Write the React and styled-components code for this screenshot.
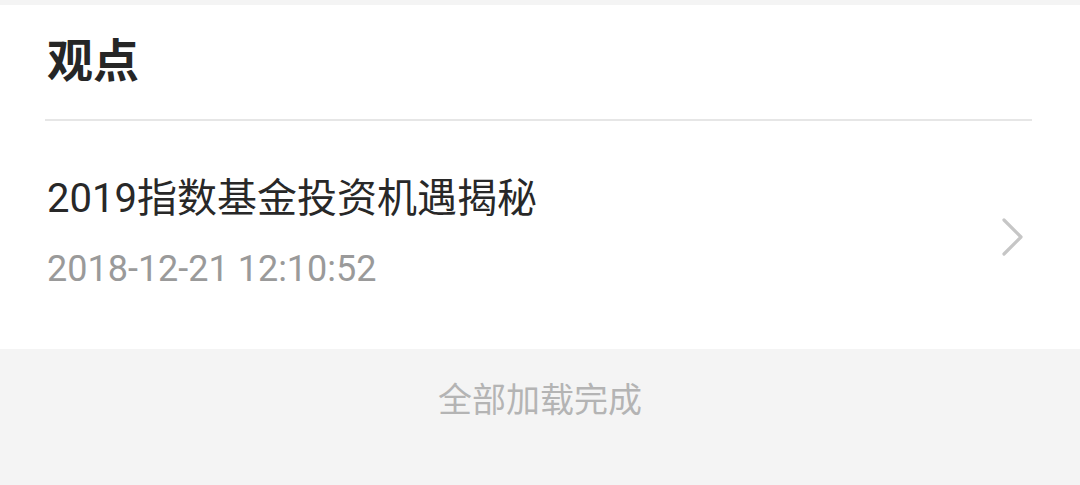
import React from "react";
import styled, { createGlobalStyle } from "styled-components";

const Global = createGlobalStyle`
  html, body { margin: 0; padding: 0; background: #f4f4f4; }
  body { font-family: Roboto, "Noto Sans CJK SC", sans-serif; }
`;

const Page = styled.div`
  width: 1080px;
  height: 485px;
  display: flex;
  flex-direction: column;
  background: #f4f4f4;
  padding-top: 5px;
  box-sizing: border-box;
`;

const Card = styled.section`
  background: #ffffff;
  padding: 0 48px 0 45px;
  height: 344px;
  box-sizing: border-box;
  display: flex;
  flex-direction: column;
`;

const Heading = styled.h2`
  margin: 0;
  height: 116px;
  display: flex;
  align-items: center;
  padding-left: 2px;
  padding-bottom: 10px;
  box-sizing: border-box;
  font-family: "Noto Sans CJK SC", sans-serif;
  font-weight: 700;
  font-size: 46px;
  color: #262626;
  border-bottom: 2px solid #e6e6e6;
`;

const Row = styled.div`
  display: flex;
  align-items: center;
  justify-content: space-between;
  flex: 1;
  padding-left: 2px;
  padding-bottom: 5px;
`;

const Texts = styled.div`
  display: flex;
  flex-direction: column;
  gap: 23px;
`;

const Title = styled.div`
  font-family: Roboto, "Noto Sans CJK SC", sans-serif;
  font-size: 40px;
  line-height: 50px;
  color: #282828;
`;

const DateText = styled.div`
  font-family: Roboto, sans-serif;
  font-size: 36px;
  line-height: 44px;
  color: #9a9a9a;
`;

const Chevron = styled.svg`
  width: 26px;
  height: 40px;
  margin-right: 6px;
  margin-top: 8px;
`;

const Footer = styled.div`
  flex: 1;
  display: flex;
  justify-content: center;
  padding-top: 27px;
  font-family: "Noto Sans CJK SC", sans-serif;
  font-size: 34px;
  line-height: 44px;
  color: #b4b4b4;
`;

export default function App() {
  return (
    <>
      <Global />
      <Page>
        <Card>
          <Heading>观点</Heading>
          <Row>
            <Texts>
              <Title>2019指数基金投资机遇揭秘</Title>
              <DateText>2018-12-21 12:10:52</DateText>
            </Texts>
            <Chevron viewBox="0 0 26 40">
              <polyline
                points="4,3 21,20 4,37"
                fill="none"
                stroke="#c6c6c6"
                strokeWidth="3.2"
                strokeLinecap="round"
                strokeLinejoin="round"
              />
            </Chevron>
          </Row>
        </Card>
        <Footer>全部加载完成</Footer>
      </Page>
    </>
  );
}
